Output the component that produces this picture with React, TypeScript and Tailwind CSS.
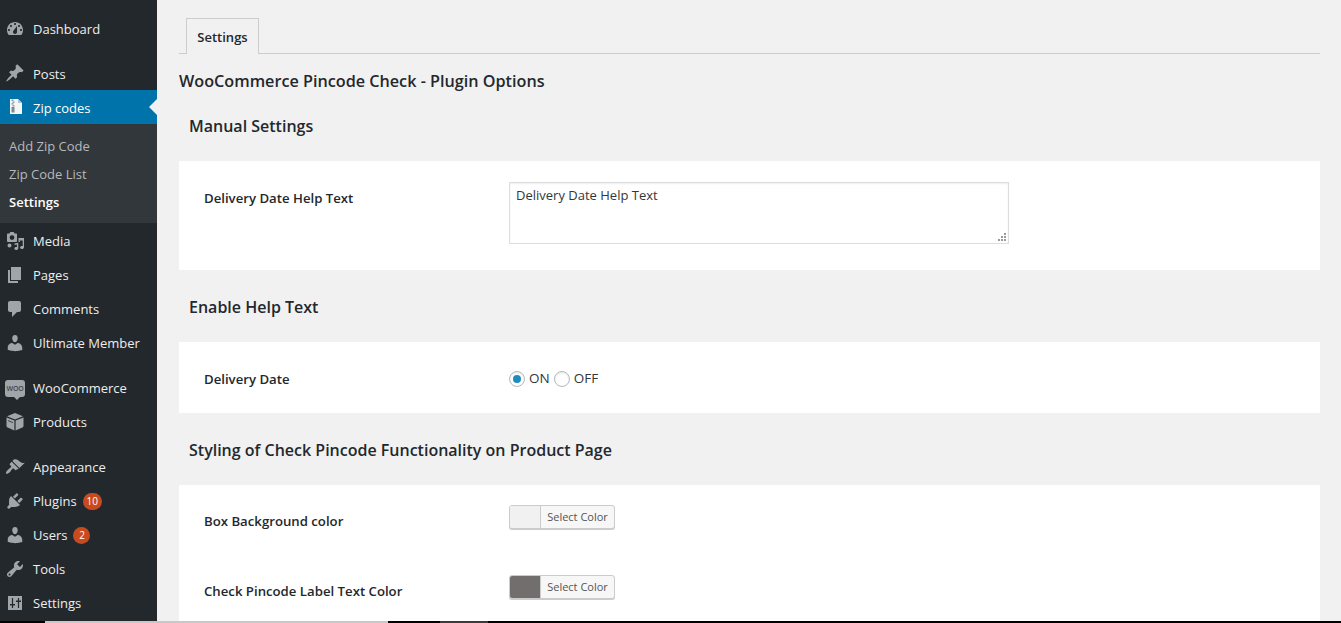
const font = { fontFamily: '"Open Sans", "Noto Sans", sans-serif' }

function Dash({ d, className = 'fill-[#a0a5aa]' }: { d: string; className?: string }) {
  return (
    <svg viewBox="0 0 20 20" className={`w-5 h-5 ${className}`} fillRule="evenodd">
      <path d={d} />
    </svg>
  )
}

const paths = {
  dashboard:
    'M3.76 16h12.48c1.1-1.37 1.76-3.11 1.76-5 0-4.42-3.58-8-8-8s-8 3.58-8 8c0 1.89.66 3.63 1.76 5zM10 4c.55 0 1 .45 1 1s-.45 1-1 1-1-.45-1-1 .45-1 1-1zM6 6c.55 0 1 .45 1 1s-.45 1-1 1-1-.45-1-1 .45-1 1-1zm8 0c.55 0 1 .45 1 1s-.45 1-1 1-1-.45-1-1 .45-1 1-1zm-5.37 5.55L12 7v6c0 1.1-.9 2-2 2s-2-.9-2-2c0-.57.24-1.08.63-1.45zM4 10c.55 0 1 .45 1 1s-.45 1-1 1-1-.45-1-1 .45-1 1-1zm12 0c.55 0 1 .45 1 1s-.45 1-1 1-1-.45-1-1 .45-1 1-1z',
  post: 'M10.44 3.02l1.82-1.82 6.36 6.35-1.83 1.82c-1.05-.68-2.48-.57-3.41.36l-.75.75c-.92.93-1.04 2.35-.35 3.41l-1.83 1.82-2.41-2.41-2.8 2.79c-.42.42-3.38 2.71-3.8 2.29s1.86-3.39 2.28-3.81l2.79-2.79L4.1 9.36l1.83-1.82c1.05.69 2.48.57 3.4-.36l.75-.75c.93-.92 1.05-2.35.36-3.41z',
  media:
    'M3 2.5h1.5L5.3 1h3.4l.8 1.5H11c.55 0 1 .45 1 1V10c0 .55-.45 1-1 1H3c-.55 0-1-.45-1-1V3.5c0-.55.45-1 1-1zM7 4.2a2.4 2.4 0 1 0 0 4.8 2.4 2.4 0 0 0 0-4.8zM13.5 7H19v9.2c0 1-.9 1.8-2 1.8s-2-.6-2-1.5.9-1.6 2-1.6c.3 0 .5 0 .7.1V9.5h-2.9V11h-1.3zM9.5 12.5l3.8-.7v5.4c0 1-.9 1.8-2 1.8s-2-.6-2-1.5.9-1.6 2-1.6c.2 0 .4 0 .6.1v-2.4l-2.4.4zM4.5 12.5a2 2 0 1 1 0 4 2 2 0 0 1 0-4z',
  page: 'M6 15V2h10v13H6zm-1 1h8v2H3V5h2v11z',
  comments: 'M5 2h9c1.1 0 2 .9 2 2v7c0 1.1-.9 2-2 2h-2l-5 5v-5H5c-1.1 0-2-.9-2-2V4c0-1.1.9-2 2-2z',
  users:
    'M10 9.25c-2.27 0-2.73-3.44-2.73-3.44C7 4.02 7.82 2 9.97 2c2.16 0 2.98 2.02 2.71 3.81 0 0-.41 3.44-2.68 3.44zm0 2.57L12.72 10c2.39 0 4.52 2.33 4.52 4.53v2.49s-3.65 1.13-7.24 1.13c-3.65 0-7.24-1.13-7.24-1.13v-2.49c0-2.25 1.94-4.48 4.47-4.48z',
  products:
    'M10 1l8 3.2-8 3.2-8-3.2zM1.5 5.4L9.4 8.6v10L2.6 15.6c-.7-.3-1.1-.9-1.1-1.6zM18.5 5.4V14c0 .7-.4 1.3-1.1 1.6l-6.8 3V8.6zM3 8.2v.9l5 2v-.9z',
  appearance:
    'M14.48 11.06L7.41 3.99l1.5-1.5c.5-.56 2.3-.47 3.51.32 1.21.8 1.43 1.28 2.91 2.1 1.18.64 2.45 1.26 4.45.85zm-.71.71L6.7 4.7 4.93 6.47c-.39.39-.39 1.02 0 1.41l1.06 1.06c.39.39.39 1.03 0 1.42-.6.6-1.43 1.11-2.21 1.69-.35.26-.7.53-1.01.84-1.34 1.34-2.37 2.91-1.57 3.71.8.8 2.37-.23 3.71-1.57.31-.31.58-.66.84-1.01.58-.78 1.09-1.61 1.69-2.21.39-.39 1.02-.39 1.41 0l1.06 1.06c.39.39 1.02.39 1.41 0z',
  plugins:
    'M13.11 4.36L9.87 7.6 8 5.73l3.24-3.24c.35-.34 1.05-.2 1.56.32.52.51.66 1.21.31 1.55zm-8 1.77l.91-1.12 9.01 9.01-1.19.84c-.71.71-2.63 1.16-3.82 1.16H6.14L4.9 17.26c-.59.59-1.54.59-2.12 0-.59-.58-.59-1.53 0-2.12l1.24-1.24v-3.88c0-1.13.4-3.19 1.09-3.89zm7.26 3.97l3.24-3.24c.34-.35 1.04-.21 1.55.31.52.51.66 1.21.31 1.55l-3.24 3.25z',
  tools:
    'M16.68 9.77c-1.34 1.34-3.3 1.67-4.95.99l-5.41 6.52c-.99.99-2.59.99-3.58 0s-.99-2.59 0-3.57l6.52-5.42c-.68-1.65-.35-3.61.99-4.95 1.28-1.28 3.12-1.62 4.72-1.06l-2.89 2.89 2.82 2.82 2.86-2.87c.53 1.58.18 3.39-1.08 4.65zM3.81 16.21c.4.39 1.04.39 1.43 0 .4-.4.4-1.04 0-1.43-.39-.4-1.03-.4-1.43 0-.39.39-.39 1.03 0 1.43z',
  settings:
    'M3 3h14v14H3zM6.9 5v6H5v1.6h1.9V15h1.2v-2.4H10V11H8.1V5zM12.9 5v2.4H11V9h1.9v6h1.2V9H16V7.4h-1.9V5z',
}

function ZipIcon() {
  return (
    <svg viewBox="0 0 20 20" className="w-5 h-5">
      <path fill="#f4f6f7" d="M5 2h8l4 4v11H5z" />
      <path fill="#b9c3c9" d="M13 2l4 4h-4z" />
      <path
        fill="#7d8a92"
        d="M6.5 2.5h2v1.3h-2zM7.5 4.4h2v1.3h-2zM6.5 6.3h2v1.3h-2zM7.5 8.2h2v1.3h-2zM6.5 10h3v5.5h-3zM7.3 12.8h1.4v1.6H7.3z"
      />
    </svg>
  )
}

function WooIcon() {
  return (
    <div className="relative w-5 h-[17px] rounded-[3px] bg-[#a0a5aa] flex items-center justify-center">
      <span className="text-[7px] leading-none font-semibold text-[#3f454a] tracking-[-0.2px]">WOO</span>
      <span className="absolute -bottom-[3px] left-[9px] w-0 h-0 border-l-[3px] border-r-[3px] border-t-[3px] border-l-transparent border-r-transparent border-t-[#a0a5aa]" />
    </div>
  )
}

function MenuItem({ icon, label, badge, low }: { icon: React.ReactNode; label: string; badge?: string; low?: boolean }) {
  return (
    <div className="h-[34px] flex items-center text-[13px] text-[#eeeeee]">
      <div className="w-[33px] pl-[5px] flex items-center shrink-0">{icon}</div>
      <span className={low ? 'pt-[4px]' : 'pt-[2px]'}>{label}</span>
      {badge && (
        <span className="ml-[6px] min-w-[17px] h-[17px] px-[4px] rounded-full bg-[#ca4a1f] text-white text-[10px] flex items-center justify-center">
          {badge}
        </span>
      )}
    </div>
  )
}

function Sidebar() {
  return (
    <aside className="w-[157px] shrink-0 h-full bg-[#23282d] pt-[12px] overflow-hidden">
      <MenuItem icon={<Dash d={paths.dashboard} />} label="Dashboard" />
      <div className="h-[10px]" />
      <MenuItem icon={<Dash d={paths.post} />} label="Posts" low />
      <div className="relative h-[34px] bg-[#0073aa] flex items-center text-[13px] text-white">
        <div className="w-[33px] pl-[5px] flex items-center shrink-0">
          <ZipIcon />
        </div>
        <span className="pt-[4px]">Zip codes</span>
        <span className="absolute right-0 top-[9px] w-0 h-0 border-y-[8px] border-r-[8px] border-y-transparent border-r-[#f1f1f1]" />
      </div>
      <div className="bg-[#32373c] pt-[9px] pb-[6px] pl-[9px] text-[13px] text-[#b4b9be]">
        <div className="h-[28px] flex items-center">Add Zip Code</div>
        <div className="h-[28px] flex items-center">Zip Code List</div>
        <div className="h-[28px] flex items-center font-semibold text-white">Settings</div>
      </div>
      <div className="h-[1px]" />
      <MenuItem icon={<Dash d={paths.media} />} label="Media" />
      <MenuItem icon={<Dash d={paths.page} />} label="Pages" />
      <MenuItem icon={<Dash d={paths.comments} />} label="Comments" />
      <MenuItem icon={<Dash d={paths.users} />} label="Ultimate Member" />
      <div className="h-[11px]" />
      <MenuItem icon={<WooIcon />} label="WooCommerce" />
      <MenuItem icon={<Dash d={paths.products} />} label="Products" />
      <div className="h-[11px]" />
      <MenuItem icon={<Dash d={paths.appearance} />} label="Appearance" />
      <MenuItem icon={<Dash d={paths.plugins} />} label="Plugins" badge="10" />
      <MenuItem icon={<Dash d={paths.users} />} label="Users" badge="2" />
      <MenuItem icon={<Dash d={paths.tools} />} label="Tools" />
      <MenuItem icon={<Dash d={paths.settings} />} label="Settings" />
    </aside>
  )
}

function SectionTitle({ children, top }: { children: React.ReactNode; top: string }) {
  return (
    <h2 className={`${top} h-[36px] mb-[17px] pl-[10px] flex items-center text-[16px] font-semibold text-[#23282d]`}>
      {children}
    </h2>
  )
}

function Label({ children }: { children: React.ReactNode }) {
  return <div className="w-[305px] shrink-0 text-[13.2px] font-semibold text-[#23282d]">{children}</div>
}

function Radio({ checked, label }: { checked?: boolean; label: string }) {
  return (
    <div className="flex items-center gap-[4px]">
      <span className="w-4 h-4 rounded-full bg-white border border-[#b4b9be] shadow-[inset_0_1px_2px_rgba(0,0,0,0.1)] flex items-center justify-center">
        {checked && <span className="w-2 h-2 rounded-full bg-[#1e8cbe]" />}
      </span>
      <span className="text-[13.5px] text-[#32373c]">{label}</span>
    </div>
  )
}

function ColorButton({ swatch }: { swatch: string }) {
  return (
    <div className="w-[106px] h-[24px] flex rounded-[3px] border border-[#cccccc] bg-[#f7f7f7] shadow-[0_1px_0_#cccccc] overflow-hidden">
      <div className={`w-[31px] h-full border-r border-[#cccccc] ${swatch}`} />
      <div className="flex-1 flex items-center justify-center text-[11px] text-[#555555]">Select Color</div>
    </div>
  )
}

export default function App() {
  return (
    <div className="w-[1341px] h-[623px] overflow-hidden bg-[#f1f1f1] flex flex-col" style={font}>
      <div className="h-[621px] flex">
        <Sidebar />
        <main className="flex-1 h-full overflow-hidden pl-[22px] pr-[21px]">
          <div className="pt-[18px] pl-[7px] h-[54px] border-b border-[#cccccc] box-border">
            <div className="w-[73px] h-[36px] pt-[2px] border border-b-0 border-[#cccccc] bg-[#f1f1f1] flex items-center justify-center text-[13px] font-semibold text-[#23282d]">
              Settings
            </div>
          </div>
          <h1 className="h-[54px] flex items-center text-[16.2px] font-semibold text-[#23282d]">
            WooCommerce Pincode Check - Plugin Options
          </h1>

          <SectionTitle top="mt-0">Manual Settings</SectionTitle>
          <section className="h-[109px] bg-white pl-[25px] pt-[21px] flex">
            <Label>
              <div className="pt-[7px]">Delivery Date Help Text</div>
            </Label>
            <div className="relative w-[500px] h-[62px]">
              <textarea
                readOnly
                defaultValue="Delivery Date Help Text"
                className="w-full h-full resize-none border border-[#dddddd] px-[6px] py-[2px] text-[13px] leading-[20px] text-[#32373c] shadow-[inset_0_1px_2px_rgba(0,0,0,0.07)] outline-none"
              />
              {/* resize grip */}
              <svg viewBox="0 0 9 9" className="absolute right-[2px] bottom-[2px] w-[9px] h-[9px] fill-[#9a9a9a]">
                <path d="M6 0h2v2H6zM3 3h2v2H3zM6 3h2v2H6zM0 6h2v2H0zM3 6h2v2H3zM6 6h2v2H6z" />
              </svg>
            </div>
          </section>

          <SectionTitle top="mt-[19px]">Enable Help Text</SectionTitle>
          <section className="h-[71px] bg-white pl-[25px] pt-[2px] flex items-center">
            <Label>
              <div className="pt-[2px]">Delivery Date</div>
            </Label>
            <div className="flex items-center gap-[4px]">
              <Radio checked label="ON" />
              <Radio label="OFF" />
            </div>
          </section>

          <SectionTitle top="mt-[19px]">Styling of Check Pincode Functionality on Product Page</SectionTitle>
          <section className="h-[136px] bg-white pl-[25px] pt-[20px]">
            <div className="h-[70px] flex">
              <Label>
                <div className="pt-[7px]">Box Background color</div>
              </Label>
              <ColorButton swatch="bg-[#f1f1f1]" />
            </div>
            <div className="h-[46px] flex">
              <Label>
                <div className="pt-[7px]">Check Pincode Label Text Color</div>
              </Label>
              <ColorButton swatch="bg-[#736e6e]" />
            </div>
          </section>
        </main>
      </div>

      {/* Strip along the bottom edge of the capture */}
      <div className="h-[2px] flex bg-black">
        <div className="w-[45px]" />
        <div className="w-[343px] bg-[#c8c8c8]" />
        <div className="w-[52px]" />
        <div className="w-[48px] bg-[#3c3c3c]" />
      </div>
    </div>
  )
}
